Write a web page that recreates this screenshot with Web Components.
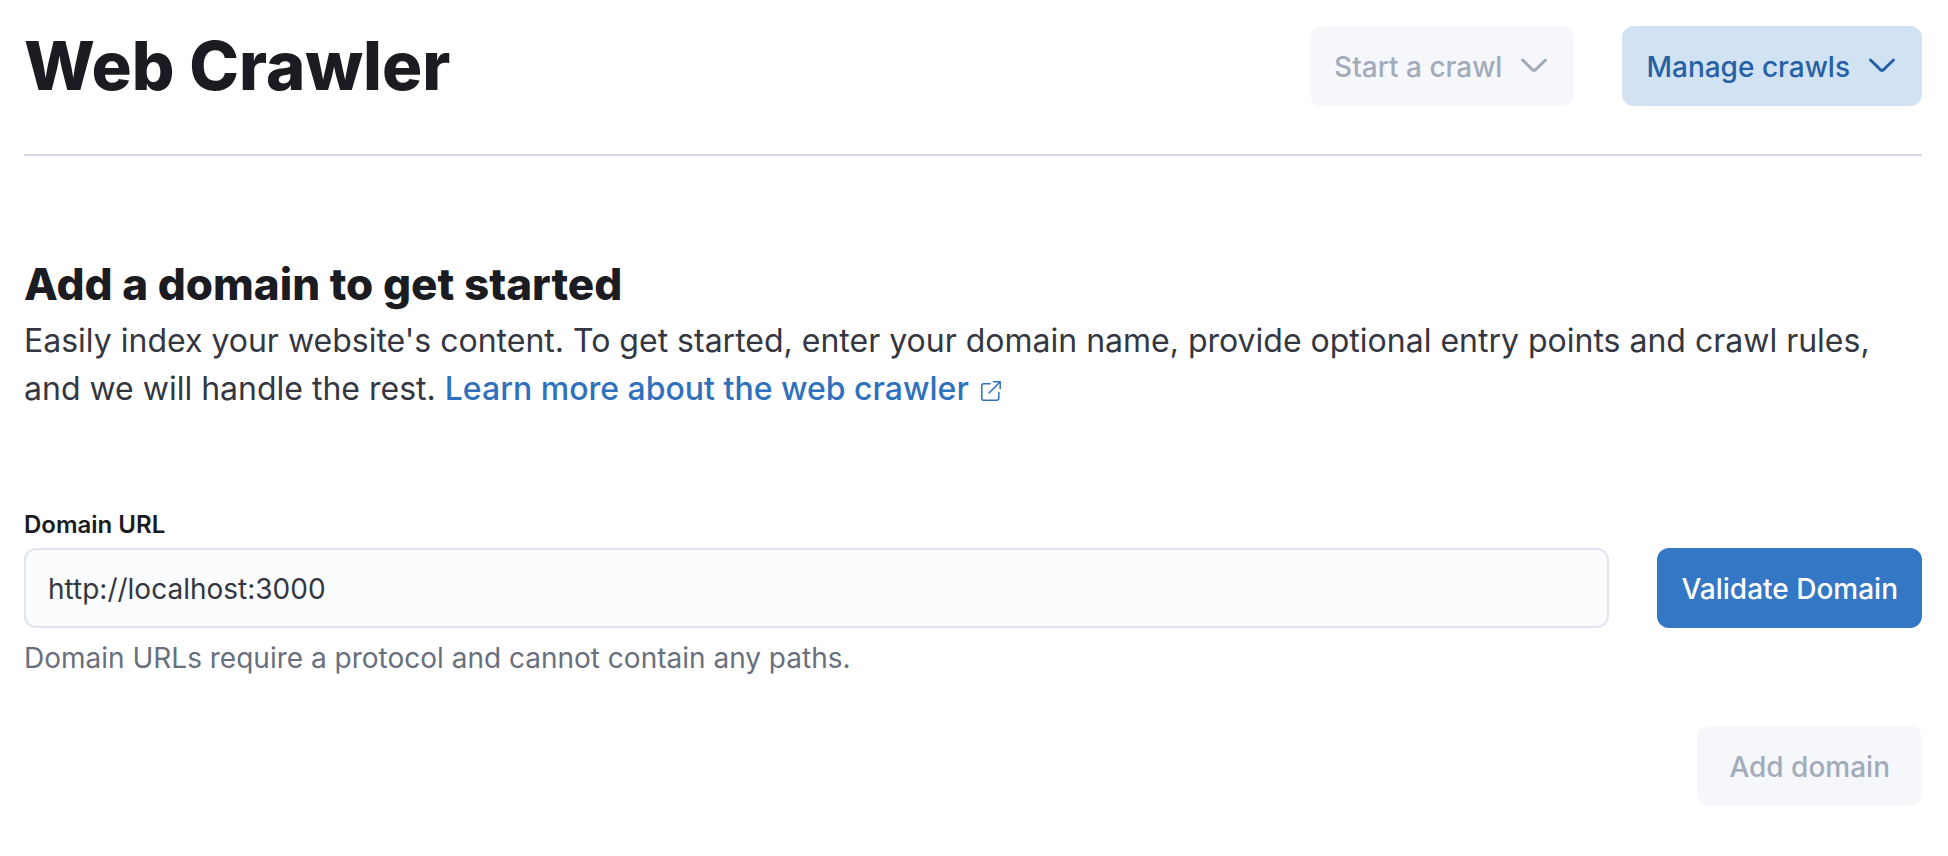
<!DOCTYPE html>
<html lang="en"><head><meta charset="utf-8"><title>Web Crawler</title>
<style>
*{box-sizing:border-box}
body{margin:0;background:#fff;color:#343741;font-family:Inter,"Liberation Sans",sans-serif}
</style></head><body>
<crawler-page></crawler-page>
<script>
class UiButton extends HTMLElement{
  connectedCallback(){
    const root=this.attachShadow({mode:'open'});
    root.innerHTML=`<style>
:host{display:block}
button{display:flex;align-items:center;justify-content:center;gap:16px;box-sizing:border-box;width:100%;height:80px;padding:2px 24px 0;border:0;border-radius:12px;font:500 28px/40px Inter,sans-serif;white-space:nowrap;background:#d1e2f2;color:#2761a4}
:host([kind=fill]) button{background:#3477c5;color:#fff}
:host([wide]) button{padding:2px 32px 0}
button:disabled{background:#f5f7fa;color:#a2abba}
svg{width:32px;height:32px;display:block}
</style><button type="button" ${this.hasAttribute('disabled')?'disabled':''}><slot></slot>${this.hasAttribute('menu')?'<svg viewBox="0 0 32 32" aria-hidden="true" fill="none" stroke="currentColor" stroke-width="3" stroke-linecap="round"><path d="M4.5 9L14.6 18.8Q16 20 17.4 18.8L27.5 9"/></svg>':''}</button>`;
  }
}
customElements.define('ui-button',UiButton);

class CrawlerHeader extends HTMLElement{
  connectedCallback(){
    this.attachShadow({mode:'open'}).innerHTML=`<style>
:host{display:block}
header{display:flex;justify-content:space-between;align-items:center;padding-bottom:48px;border-bottom:2px solid #d3dae6}
h1{margin:0;font-size:67px;line-height:80px;font-weight:800;color:#1a1c21}
.actions{display:flex;gap:48px}
</style><header><h1><slot></slot></h1><div class="actions"><slot name="actions"></slot></div></header>`;
  }
}
customElements.define('crawler-header',CrawlerHeader);

class DomainForm extends HTMLElement{
  connectedCallback(){
    this.attachShadow({mode:'open'}).innerHTML=`<style>
:host{display:block}
form{margin:0}
label{display:block;font-size:24px;line-height:36px;font-weight:600;color:#1a1c21;margin-bottom:5px}
.row{display:flex;gap:48px}
input{flex:1;min-width:0;box-sizing:border-box;height:80px;padding:2px 22px 0;border:2px solid #e2e5f0;border-radius:12px;background:#fbfcfe;color:#343741;font:400 28px/40px Inter,sans-serif}
p{margin:12px 0 0;font-size:28px;line-height:36px;color:#69707d}
.submit{display:flex;justify-content:flex-end;margin-top:50px}
</style><form><label for="url">Domain URL</label>
<div class="row"><input id="url" type="text" value="http://localhost:3000" aria-describedby="help"><ui-button kind="fill">Validate Domain</ui-button></div>
<p id="help">Domain URLs require a protocol and cannot contain any paths.</p>
<div class="submit"><ui-button wide disabled>Add domain</ui-button></div></form>`;
  }
}
customElements.define('domain-form',DomainForm);

class CrawlerPage extends HTMLElement{
  connectedCallback(){
    this.attachShadow({mode:'open'}).innerHTML=`<style>
:host{display:block;padding:26px 26px 50px 24px}
h2{margin:102px 0 0;font-size:44px;line-height:52px;font-weight:800;color:#1a1c21}
.intro{margin:7px 0 0;font-size:32px;line-height:48px}
a{color:#2f71bd;font-weight:500;text-decoration:none}
a svg{width:20px;height:20px;margin-left:12px;vertical-align:-1px}
domain-form{margin-top:94px}
</style>
<crawler-header>Web Crawler<ui-button slot="actions" menu disabled>Start a crawl</ui-button><ui-button slot="actions" menu>Manage crawls</ui-button></crawler-header>
<main><h2>Add a domain to get started</h2>
<p class="intro">Easily index your website's content. To get started, enter your domain name, provide optional entry points and crawl rules, and we will handle the rest. <a href="#">Learn more about the web crawler<svg viewBox="0 0 20 20" fill="none" stroke="currentColor" stroke-width="1.5" stroke-linecap="round" aria-hidden="true"><path d="M9 2.8H2.8Q.8 2.8.8 4.8V17.2Q.8 19.2 2.8 19.2H15.8Q17.8 19.2 17.8 17.2V11.5M8 12L19 1M12.5.8H19.2V7.5"/></svg></a></p>
<domain-form></domain-form></main>`;
  }
}
customElements.define('crawler-page',CrawlerPage);
</script></body></html>
